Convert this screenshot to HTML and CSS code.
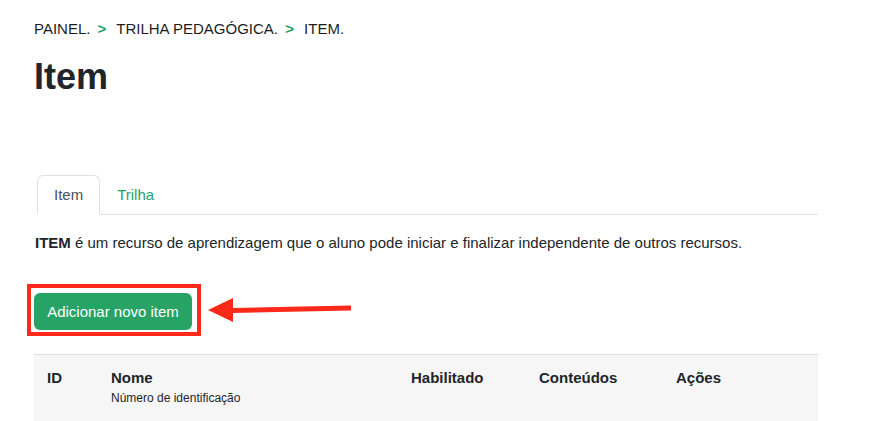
FILE: index.html
```html
<!DOCTYPE html>
<html lang="pt-BR">
<head>
  <meta charset="UTF-8">
  <meta name="viewport" content="width=device-width, initial-scale=1.0">
  <title>Item</title>
  <link rel="stylesheet" href="styles.css">
</head>
<body>
  <div class="container">
    <!-- Breadcrumb -->
    <nav class="breadcrumb">
      <a href="#">PAINEL.</a>
      <span class="sep">&gt;</span>
      <a href="#">TRILHA PEDAGÓGICA.</a>
      <span class="sep">&gt;</span>
      <span>ITEM.</span>
    </nav>

    <h1>Item</h1>

    <!-- Tabs -->
    <ul class="tabs">
      <li><a href="#" class="tab active">Item</a></li>
      <li><a href="#" class="tab">Trilha</a></li>
    </ul>

    <p class="intro"><strong>ITEM</strong> é um recurso de aprendizagem que o aluno pode iniciar e finalizar independente de outros recursos.</p>

    <!-- Add button (highlighted) -->
    <div class="actions">
      <div class="highlight">
        <button class="btn-add">Adicionar novo item</button>
      </div>
      <svg class="arrow" width="146" height="26" viewBox="0 0 146 26">
        <polygon points="0,13 25,1 25,25" fill="#fd2a1c"/>
        <path d="M24 13.5 L143 11" stroke="#fd2a1c" stroke-width="5"/>
      </svg>
    </div>

    <!-- Table -->
    <table class="items">
      <thead>
        <tr>
          <th class="col-id">ID</th>
          <th class="col-name">Nome<small>Número de identificação</small></th>
          <th class="col-enabled">Habilitado</th>
          <th class="col-content">Conteúdos</th>
          <th>Ações</th>
        </tr>
      </thead>
    </table>
  </div>
</body>
</html>
```

FILE: styles.css
```css
/* General Styles */
body {
  font-family: 'Liberation Sans', Arial, sans-serif;
  font-size: 15px;
  line-height: 1.5;
  color: #212529;
  background-color: #ffffff;
  margin: 0;
  padding: 0;
}

.container {
  width: 784px;
  padding: 18px 0 0 34px;
}

a {
  color: inherit;
  text-decoration: none;
}

/* Breadcrumb */
.breadcrumb {
  color: #1d1d1f;
}

.breadcrumb .sep {
  color: #26a365;
  font-weight: 700;
  margin: 0 6px 0 3px;
}

h1 {
  font-size: 36px;
  line-height: 1.2;
  font-weight: 700;
  margin: 14px 0 77px;
  color: #212529;
}

/* Tabs */
.tabs {
  list-style: none;
  display: flex;
  margin: 0 0 17px 3px;
  padding: 0;
  border-bottom: 1px solid #dee2e6;
}

.tabs li {
  margin-bottom: -1px;
}

.tab {
  display: block;
  padding: 8px 16px;
  border: 1px solid transparent;
  border-radius: 6px 6px 0 0;
  color: #26a365;
}

.tab.active {
  color: #495057;
  background-color: #fff;
  border-color: #dee2e6 #dee2e6 #fff;
}

.intro {
  margin: 0 0 29px 1px;
}

/* Add button */
.actions {
  display: flex;
  align-items: center;
  margin: 0 0 18px -7px;
}

.highlight {
  border: 4px solid #fd2a1c;
  padding: 5px 5px 2px 3px;
}

.btn-add {
  display: block;
  font-family: inherit;
  font-size: 15px;
  line-height: 23px;
  color: #fff;
  background-color: #26a365;
  border: none;
  border-radius: 6px;
  padding: 7px 13px;
  width: 158px;
}

.arrow {
  margin-left: 7px;
}

/* Table */
.items {
  width: 784px;
  border-collapse: collapse;
  background-color: #f6f6f6;
}

.items th {
  text-align: left;
  vertical-align: top;
  font-weight: 700;
  padding: 12px 13px 15px;
  border-top: 1px solid #dee2e6;
  border-bottom: 1px solid #dee2e6;
}

.items th small {
  display: block;
  font-size: 12px;
  font-weight: 400;
  line-height: 1.4;
  margin-top: 1px;
}

.col-id { width: 38px; }
.col-name { width: 274px; }
.col-enabled { width: 102px; }
.col-content { width: 111px; }
```
